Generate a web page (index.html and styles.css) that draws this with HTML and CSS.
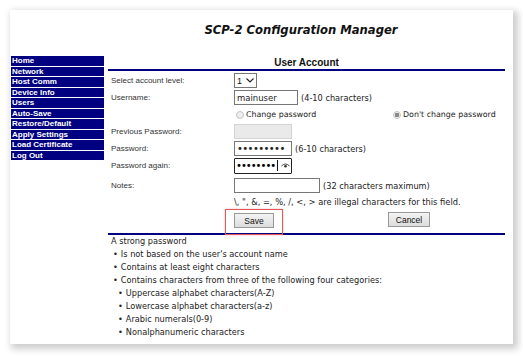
FILE: index.html
```html
<!DOCTYPE html>
<html lang="en">
<head>
    <meta charset="UTF-8">
    <meta name="viewport" content="width=device-width, initial-scale=1.0">
    <title>SCP-2 Configuration Manager</title>
    <link rel="stylesheet" href="styles.css">
</head>
<body>
    <div class="window">
        <!-- Left menu -->
        <aside class="side">
            <ul class="menu">
                <li><a href="#">Home</a></li>
                <li><a href="#">Network</a></li>
                <li><a href="#">Host Comm</a></li>
                <li><a href="#">Device Info</a></li>
                <li><a href="#">Users</a></li>
                <li><a href="#">Auto-Save</a></li>
                <li><a href="#">Restore/Default</a></li>
                <li><a href="#">Apply Settings</a></li>
                <li><a href="#">Load Certificate</a></li>
                <li><a href="#">Log Out</a></li>
            </ul>
        </aside>

        <main class="main">
            <h1 class="app-title">SCP-2 Configuration Manager</h1>
            <h2 class="section-title">User Account</h2>

            <form class="account-form">
                <div class="row">
                    <label class="label">Select account level:</label>
                    <span class="select-box">
                        <select class="level">
                            <option>1</option>
                            <option>2</option>
                        </select>
                        <svg class="chevron" width="8" height="5" viewBox="0 0 8 5"><path d="M0.5 0.5 L4 4 L7.5 0.5" fill="none" stroke="#222" stroke-width="1.1"/></svg>
                    </span>
                </div>
                <div class="row">
                    <label class="label">Username:</label>
                    <input class="text-input username" type="text" value="mainuser">
                    <span class="hint">(4-10 characters)</span>
                </div>
                <div class="row radios">
                    <span class="label"></span>
                    <label class="choice choice-left"><input type="radio" name="pw"> Change password</label>
                    <label class="choice"><input type="radio" name="pw" checked> Don't change password</label>
                </div>
                <div class="row">
                    <label class="label">Previous Password:</label>
                    <input class="text-input pw" type="password" disabled>
                </div>
                <div class="row">
                    <label class="label">Password:</label>
                    <input class="text-input pw" type="password" value="123456789">
                    <span class="hint">(6-10 characters)</span>
                </div>
                <div class="row">
                    <label class="label">Password again:</label>
                    <span class="pw-box">
                        <input class="pw-inner" type="password" value="12345678">
                        <span class="caret"></span>
                        <svg class="eye" width="9" height="6" viewBox="0 0 9 6"><path d="M0.5 3 Q4.5 -1 8.5 3" fill="none" stroke="#333" stroke-width="0.9"/><circle cx="4.5" cy="3.3" r="1.3" fill="#333"/></svg>
                    </span>
                </div>
                <div class="row notes-row">
                    <label class="label">Notes:</label>
                    <input class="text-input notes" type="text">
                    <span class="hint">(32 characters maximum)</span>
                </div>
                <div class="row warn-row">
                    <span class="label"></span>
                    <span class="hint warn">\, ", &amp;, =, %, /, &lt;, &gt; are illegal characters for this field.</span>
                </div>
                <div class="row buttons">
                    <span class="label"></span>
                    <span class="marked"><button type="button" class="btn">Save</button></span>
                    <button type="button" class="btn cancel">Cancel</button>
                </div>
            </form>

            <div class="rules">
                <p>A strong password</p>
                <ul>
                    <li>Is not based on the user's account name</li>
                    <li>Contains at least eight characters</li>
                    <li>Contains characters from three of the following four categories:
                        <ul>
                            <li>Uppercase alphabet characters(A-Z)</li>
                            <li>Lowercase alphabet characters(a-z)</li>
                            <li>Arabic numerals(0-9)</li>
                            <li>Nonalphanumeric characters</li>
                        </ul>
                    </li>
                </ul>
            </div>
        </main>
    </div>
</body>
</html>
```

FILE: styles.css
```css
body {
    margin: 0;
    padding: 10px 10px 12px 10px;
    background: #fff;
    font-family: 'Liberation Sans', Arial, sans-serif;
    color: #222;
}

.window {
    display: flex;
    width: 503px;
    height: 334px;
    background: #fff;
    box-shadow: 3px 3px 7px 2px rgba(0, 0, 0, 0.2);
}

/* left menu */
.side {
    width: 93px;
    padding: 46px 0 0 1px;
}

.menu {
    list-style: none;
    margin: 0;
    padding: 0;
}

.menu li {
    height: 9.5px;
    margin-bottom: 1px;
    background: #000080;
    line-height: 10px;
}

.menu a {
    display: block;
    padding-left: 1px;
    color: #fff;
    font-size: 8px;
    font-weight: bold;
    text-decoration: none;
}

/* main area */
.main {
    width: 397px;
    padding-left: 4px;
}

.app-title {
    margin: 0;
    padding: 13px 11px 0 0;
    height: 25px;
    font-family: 'DejaVu Sans', Verdana, sans-serif;
    font-size: 11.6px;
    font-style: italic;
    font-weight: bold;
    text-align: center;
    color: #111;
}

.section-title {
    margin: 0;
    padding-top: 8px;
    height: 13px;
    font-size: 10px;
    font-weight: bold;
    text-align: center;
    color: #111;
    border-bottom: 2px solid #000080;
    line-height: 13px;
}

.account-form {
    padding-top: 1px;
}

.row {
    display: flex;
    align-items: center;
    height: 17px;
    font-size: 8px;
}

.label {
    width: 123px;
    flex-shrink: 0;
    padding-left: 3px;
    color: #333;
}

.hint {
    margin-left: 3px;
    font-family: 'DejaVu Sans', Verdana, sans-serif;
    font-size: 8.2px;
    color: #222;
}

.warn-row {
    height: 15px;
}

.warn {
    margin-left: 0;
    font-size: 8.3px;
}

.select-box {
    display: flex;
    align-items: center;
    gap: 3px;
    height: 13px;
    padding: 0 2px 0 2px;
    border: 1px solid #777;
    background: #fff;
}

.level {
    appearance: none;
    border: 0;
    padding: 0;
    background: transparent;
    font-family: 'Liberation Sans', Arial, sans-serif;
    font-size: 9px;
    color: #111;
}

.text-input {
    box-sizing: border-box;
    height: 15px;
    padding: 0 2px;
    border: 1px solid #777;
    font-family: 'DejaVu Sans', Verdana, sans-serif;
    font-size: 8.5px;
    color: #222;
}

.username {
    width: 64px;
}

.pw {
    width: 58px;
    font-size: 10px;
    letter-spacing: -0.6px;
}

.pw:disabled {
    background: #eaeaea;
    border-color: #d4d4d4;
}

.notes {
    width: 86px;
}

.pw-box {
    display: flex;
    align-items: center;
    box-sizing: border-box;
    width: 58px;
    height: 16px;
    border: 1.5px solid #222;
    border-radius: 1px;
    padding-left: 1px;
}

.pw-inner {
    width: 41px;
    border: 0;
    padding: 0;
    font-family: 'DejaVu Sans', Verdana, sans-serif;
    font-size: 10px;
    letter-spacing: -1px;
    outline: none;
}

.caret {
    width: 1px;
    height: 11px;
    background: #111;
}

.eye {
    margin-left: 3px;
}

.radios .choice {
    display: flex;
    align-items: center;
    gap: 2px;
    font-family: 'DejaVu Sans', Verdana, sans-serif;
    font-size: 7.9px;
    color: #222;
}

.radios .choice-left {
    width: 157px;
}

.choice input {
    appearance: none;
    width: 8px;
    height: 8px;
    margin: 0 0 0 2px;
    border: 1px solid #c4c4c4;
    border-radius: 50%;
    background: #eee;
}

.choice input:checked {
    background: radial-gradient(circle, #888 0, #888 2px, #eee 2.5px);
}

.notes-row {
    margin-top: 3px;
}

.buttons {
    height: 19px;
    align-items: flex-start;
    padding-top: 4px;
}

.marked {
    position: relative;
}

/* red annotation frame around Save */
.marked::after {
    content: "";
    position: absolute;
    top: -4px;
    left: -9px;
    right: -9px;
    bottom: -7px;
    border: 1.5px solid #e4585c;
    box-shadow: 0 0 2px rgba(228, 88, 92, 0.4);
}

.btn {
    height: 15px;
    width: 40px;
    padding: 0;
    border: 1px solid #999;
    background: linear-gradient(#f4f4f4, #dcdcdc);
    font-family: 'Liberation Sans', Arial, sans-serif;
    font-size: 8.5px;
    color: #111;
}

.cancel {
    width: 42px;
    margin-left: 114px;
    margin-top: -1px;
}

/* password rules */
.rules {
    margin-top: 1px;
    border-top: 2px solid #000080;
    padding: 0 0 0 3px;
    font-family: 'DejaVu Sans', Verdana, sans-serif;
    font-size: 8.2px;
    color: #222;
}

.rules p {
    margin: 0;
    line-height: 13px;
}

.rules ul {
    list-style: none;
    margin: 0;
    padding: 0 0 0 2px;
}

.rules li {
    line-height: 13px;
}

.rules li::before {
    content: "\2022";
    margin-right: 3px;
}

.rules ul ul {
    padding-left: 5px;
}
```
